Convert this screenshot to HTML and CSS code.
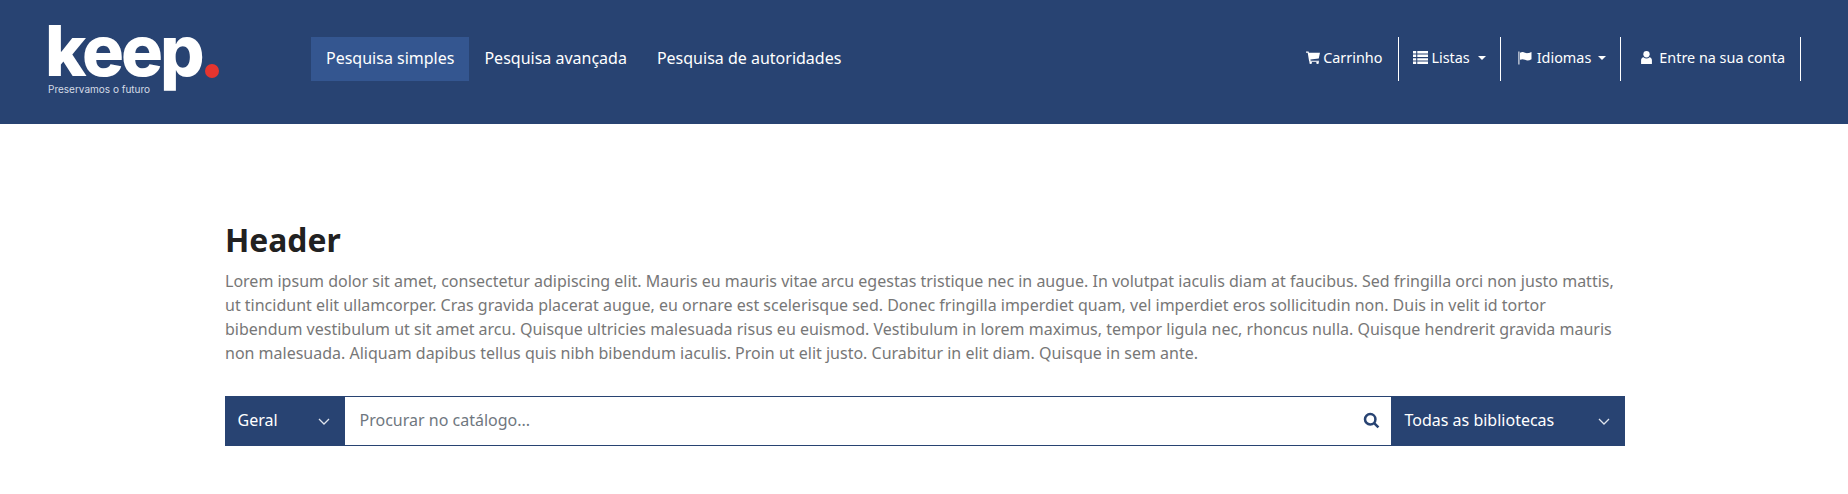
FILE: index.html
```html
<!DOCTYPE html>
<html lang="pt">
<head>
<meta charset="UTF-8" />
<title>Keep - Pesquisa</title>
<link rel="stylesheet" href="styles.css">
</head>
<body>
<header class="topbar">
  <a class="logo" href="#">
    <span class="logo-word">keep</span>
    <span class="logo-dot"></span>
    <span class="logo-tag">Preservamos o futuro</span>
  </a>
  <nav class="main-nav">
    <a class="active" href="#">Pesquisa simples</a>
    <a href="#">Pesquisa avançada</a>
    <a href="#">Pesquisa de autoridades</a>
  </nav>
  <ul class="user-nav">
    <li class="item-cart">
      <a href="#">
        <svg class="ico ico-cart" viewBox="0 0 15 14"><path d="M0 .5h2.7l.4 1.500H15l-1.300 6.200-9 1 .3 1.200h9v1.200H3.400L1.800 1.800H0z"/><circle cx="5" cy="12.600" r="1.400"/><circle cx="12.400" cy="12.600" r="1.400"/></svg>
        Carrinho
      </a>
    </li>
    <li class="item-lists">
      <a href="#">
        <svg class="ico ico-list" viewBox="0 0 14 12"><path d="M0 0h3v2.200H0zM4 0h10v2.200H4zM0 3.200h3v2.400H0zM4 3.200h10v2.400H4zM0 6.600h3v2.200H0zM4 6.600h10v2.200H4zM0 9.800h3V12H0zM4 9.800h10V12H4z"/></svg>
        Listas <span class="caret"></span>
      </a>
    </li>
    <li class="item-lang">
      <a href="#">
        <svg class="ico ico-flag" viewBox="0 0 14 13"><path d="M.4 0h1v13h-1z"/><path d="M2 1.200c2-1 3.500-.8 5 0s3.500.6 6.500-.7v7.200c-2.500 1.400-4.500 1.500-6.500.6s-3-.9-5 0z"/></svg>
        Idiomas <span class="caret"></span>
      </a>
    </li>
    <li class="item-login">
      <a href="#">
        <svg class="ico ico-user" viewBox="0 0 10 12"><circle cx="5" cy="3" r="2.900"/><path d="M0 12V8.500C0 7 1 6 2.200 5.800 3 6.500 4 6.900 5 6.900s2-.4 2.800-1.100C9 6 10 7 10 8.500V12z"/></svg>
        Entre na sua conta
      </a>
    </li>
  </ul>
</header>

<main class="content">
  <h1>Header</h1>
  <p>Lorem ipsum dolor sit amet, consectetur adipiscing elit. Mauris eu mauris vitae arcu egestas tristique nec in augue. In volutpat iaculis diam at faucibus. Sed fringilla orci non justo mattis, ut tincidunt elit ullamcorper. Cras gravida placerat augue, eu ornare est scelerisque sed. Donec fringilla imperdiet quam, vel imperdiet eros sollicitudin non. Duis in velit id tortor bibendum vestibulum ut sit amet arcu. Quisque ultricies malesuada risus eu euismod. Vestibulum in lorem maximus, tempor ligula nec, rhoncus nulla. Quisque hendrerit gravida mauris non malesuada. Aliquam dapibus tellus quis nibh bibendum iaculis. Proin ut elit justo. Curabitur in elit diam. Quisque in sem ante.</p>

  <form class="search-bar">
    <div class="pick pick-type">
      <span>Geral</span>
      <svg class="chev" viewBox="0 0 12 7"><path d="M1 1l5 5 5-5"/></svg>
    </div>
    <div class="search-field">
      <span class="placeholder">Procurar no catálogo...</span>
      <svg class="ico-search" viewBox="0 0 16 16"><circle cx="6.800" cy="6.800" r="4.900"/><path d="M10.500 10.500l4 4"/></svg>
    </div>
    <div class="pick pick-lib">
      <span>Todas as bibliotecas</span>
      <svg class="chev" viewBox="0 0 12 7"><path d="M1 1l5 5 5-5"/></svg>
    </div>
  </form>
</main>
</body>
</html>
```

FILE: styles.css
```css
* {
  box-sizing: border-box;
}
body {
  margin: 0;
  background: #fff;
  font-family: "Noto Sans", "Open Sans", sans-serif;
  font-size: 16px;
  line-height: 24px;
  color: #777;
}
a {
  color: inherit;
  text-decoration: none;
}

/* top bar */
.topbar {
  display: flex;
  align-items: center;
  height: 124px;
  background: #284372;
  color: #fff;
  padding: 0 47px 6px 49px;
}
.logo {
  position: relative;
  display: block;
  align-self: flex-start;
  width: 262px;
  height: 118px;
  flex: none;
}
.logo-word {
  position: absolute;
  left: -4px;
  top: 21px;
  font-family: Inter, sans-serif;
  font-weight: 800;
  font-size: 70px;
  line-height: 60px;
  letter-spacing: -3px;
  color: #fff;
}
.logo-dot {
  position: absolute;
  left: 156px;
  top: 64px;
  width: 14px;
  height: 14px;
  border-radius: 50%;
  background: #e5352f;
}
.logo-tag {
  position: absolute;
  left: -1px;
  top: 82px;
  font-family: Inter, sans-serif;
  font-size: 10px;
  line-height: 14px;
  color: #d5dbe6;
  white-space: nowrap;
}

.main-nav {
  display: flex;
}
.main-nav a {
  display: block;
  padding: 9px 15px 11px;
  line-height: 24px;
}
.main-nav a.active {
  background: #345690;
}

.user-nav {
  display: flex;
  list-style: none;
  margin: 0 0 0 auto;
  padding: 0;
  font-size: 14.400px;
}
.user-nav li {
  height: 44px;
  border-right: 1px solid #fff;
}
.user-nav a {
  display: flex;
  align-items: center;
  height: 44px;
  padding-bottom: 3px;
  white-space: nowrap;
}
.item-cart {
  padding: 0 16px 0 0;
}
.item-lists {
  padding: 0 14px;
}
.item-lang {
  padding: 0 14px 0 17px;
}
.item-login {
  padding: 0 15px 0 20px;
}
.ico {
  fill: #fff;
  flex: none;
}
.ico-cart {
  width: 14px;
  height: 13px;
  margin-right: 3px;
}
.ico-list {
  width: 15px;
  height: 13px;
  margin-right: 3px;
}
.ico-flag {
  width: 14px;
  height: 14px;
  margin-right: 5px;
}
.ico-user {
  width: 11px;
  height: 13px;
  margin-right: 7px;
}
.caret {
  width: 0;
  height: 0;
  margin-left: 8px;
  border-top: 4px solid #fff;
  border-left: 4px solid transparent;
  border-right: 4px solid transparent;
}
.item-lang .caret {
  margin-left: 7px;
}

/* body text */
.content {
  width: 1400px;
  margin: 0 0 0 225px;
  padding-top: 97px;
}
h1 {
  margin: 0 0 10px;
  font-size: 31.800px;
  line-height: 38px;
  font-weight: 700;
  color: #212121;
}
p {
  margin: 0 0 31px;
}

/* search */
.search-bar {
  display: flex;
  height: 50px;
  border: 1px solid #284372;
}
.pick {
  display: flex;
  align-items: center;
  justify-content: space-between;
  margin: -1px 0;
  background: #284372;
  color: #fff;
  padding: 0 15px 2px 12.500px;
}
.pick-type {
  width: 120px;
  margin-left: -1px;
}
.pick-lib {
  width: 234px;
  margin-right: -1px;
  padding-left: 13.500px;
}
.chev {
  width: 12px;
  height: 7px;
  margin-top: 3px;
  fill: none;
  stroke: #dfe4ec;
  stroke-width: 1.300;
}
.search-field {
  flex: 1;
  display: flex;
  align-items: center;
  justify-content: space-between;
  padding: 0 11px 2px 14.500px;
  background: #fff;
}
.placeholder {
  color: #6f7780;
}
.ico-search {
  width: 17px;
  height: 17px;
  fill: none;
  stroke: #284372;
  stroke-width: 2.400;
}
```
